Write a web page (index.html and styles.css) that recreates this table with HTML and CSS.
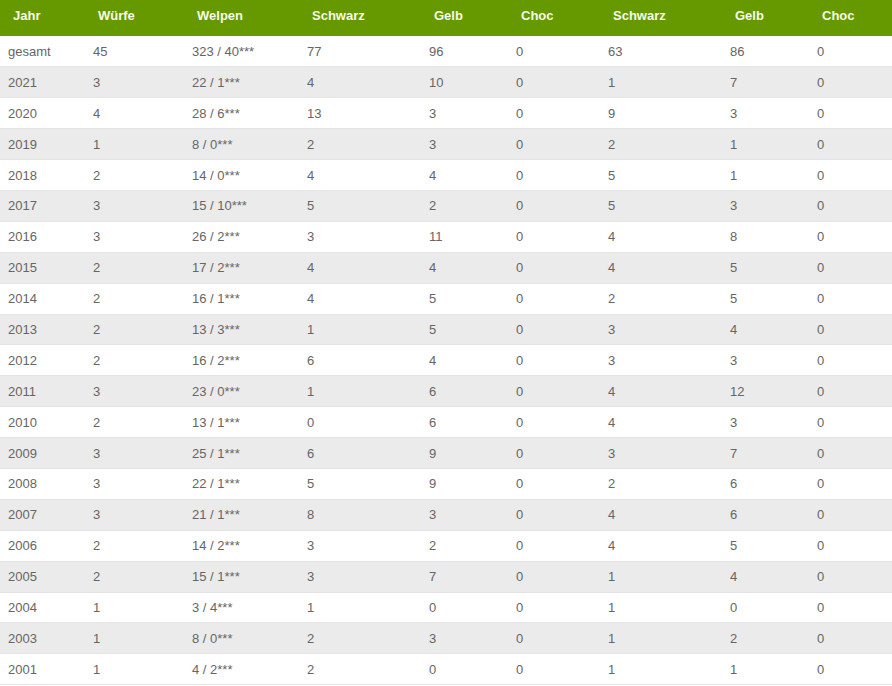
FILE: index.html
```html
<!DOCTYPE html>
<html lang="de">
<head>
<meta charset="utf-8">
<title>Würfe</title>
<link rel="stylesheet" href="styles.css">
</head>
<body>
<table class="stats">
<colgroup>
<col class="c1"><col class="c2"><col class="c3"><col class="c4"><col class="c5"><col class="c6"><col class="c7"><col class="c8"><col class="c9">
</colgroup>
<thead>
<tr><th>Jahr</th><th>Würfe</th><th>Welpen</th><th>Schwarz</th><th>Gelb</th><th>Choc</th><th>Schwarz</th><th>Gelb</th><th>Choc</th></tr>
</thead>
<tbody>
<tr><td>gesamt</td><td>45</td><td>323 / 40***</td><td>77</td><td>96</td><td>0</td><td>63</td><td>86</td><td>0</td></tr>
<tr><td>2021</td><td>3</td><td>22 / 1***</td><td>4</td><td>10</td><td>0</td><td>1</td><td>7</td><td>0</td></tr>
<tr><td>2020</td><td>4</td><td>28 / 6***</td><td>13</td><td>3</td><td>0</td><td>9</td><td>3</td><td>0</td></tr>
<tr><td>2019</td><td>1</td><td>8 / 0***</td><td>2</td><td>3</td><td>0</td><td>2</td><td>1</td><td>0</td></tr>
<tr><td>2018</td><td>2</td><td>14 / 0***</td><td>4</td><td>4</td><td>0</td><td>5</td><td>1</td><td>0</td></tr>
<tr><td>2017</td><td>3</td><td>15 / 10***</td><td>5</td><td>2</td><td>0</td><td>5</td><td>3</td><td>0</td></tr>
<tr><td>2016</td><td>3</td><td>26 / 2***</td><td>3</td><td>11</td><td>0</td><td>4</td><td>8</td><td>0</td></tr>
<tr><td>2015</td><td>2</td><td>17 / 2***</td><td>4</td><td>4</td><td>0</td><td>4</td><td>5</td><td>0</td></tr>
<tr><td>2014</td><td>2</td><td>16 / 1***</td><td>4</td><td>5</td><td>0</td><td>2</td><td>5</td><td>0</td></tr>
<tr><td>2013</td><td>2</td><td>13 / 3***</td><td>1</td><td>5</td><td>0</td><td>3</td><td>4</td><td>0</td></tr>
<tr><td>2012</td><td>2</td><td>16 / 2***</td><td>6</td><td>4</td><td>0</td><td>3</td><td>3</td><td>0</td></tr>
<tr><td>2011</td><td>3</td><td>23 / 0***</td><td>1</td><td>6</td><td>0</td><td>4</td><td>12</td><td>0</td></tr>
<tr><td>2010</td><td>2</td><td>13 / 1***</td><td>0</td><td>6</td><td>0</td><td>4</td><td>3</td><td>0</td></tr>
<tr><td>2009</td><td>3</td><td>25 / 1***</td><td>6</td><td>9</td><td>0</td><td>3</td><td>7</td><td>0</td></tr>
<tr><td>2008</td><td>3</td><td>22 / 1***</td><td>5</td><td>9</td><td>0</td><td>2</td><td>6</td><td>0</td></tr>
<tr><td>2007</td><td>3</td><td>21 / 1***</td><td>8</td><td>3</td><td>0</td><td>4</td><td>6</td><td>0</td></tr>
<tr><td>2006</td><td>2</td><td>14 / 2***</td><td>3</td><td>2</td><td>0</td><td>4</td><td>5</td><td>0</td></tr>
<tr><td>2005</td><td>2</td><td>15 / 1***</td><td>3</td><td>7</td><td>0</td><td>1</td><td>4</td><td>0</td></tr>
<tr><td>2004</td><td>1</td><td>3 / 4***</td><td>1</td><td>0</td><td>0</td><td>1</td><td>0</td><td>0</td></tr>
<tr><td>2003</td><td>1</td><td>8 / 0***</td><td>2</td><td>3</td><td>0</td><td>1</td><td>2</td><td>0</td></tr>
<tr><td>2001</td><td>1</td><td>4 / 2***</td><td>2</td><td>0</td><td>0</td><td>1</td><td>1</td><td>0</td></tr>
</tbody>
</table>
</body>
</html>
```
FILE: styles.css
```css
html, body {
  margin: 0;
  padding: 0;
  background: #ffffff;
}
.stats {
  width: 892px;
  border-collapse: collapse;
  table-layout: fixed;
  font-family: "Liberation Sans", Arial, sans-serif;
  font-size: 13px;
}
.c1 { width: 85px; }
.c2 { width: 99px; }
.c3 { width: 115px; }
.c4 { width: 122px; }
.c5 { width: 87px; }
.c6 { width: 92px; }
.c7 { width: 122px; }
.c8 { width: 87px; }
.c9 { width: 83px; }
.stats thead th {
  background: #669900;
  color: #f5fae8;
  font-weight: bold;
  text-align: left;
  height: 36px;
  padding: 0 0 6px 13px;
  box-sizing: border-box;
}
.stats tbody td {
  color: #666666;
  height: 30.9px;
  padding: 0 0 0 8px;
  box-sizing: border-box;
  border-bottom: 1px solid #e4e4e4;
  white-space: nowrap;
}
.stats tbody tr:nth-child(even) td {
  background: #ebebeb;
}
```
